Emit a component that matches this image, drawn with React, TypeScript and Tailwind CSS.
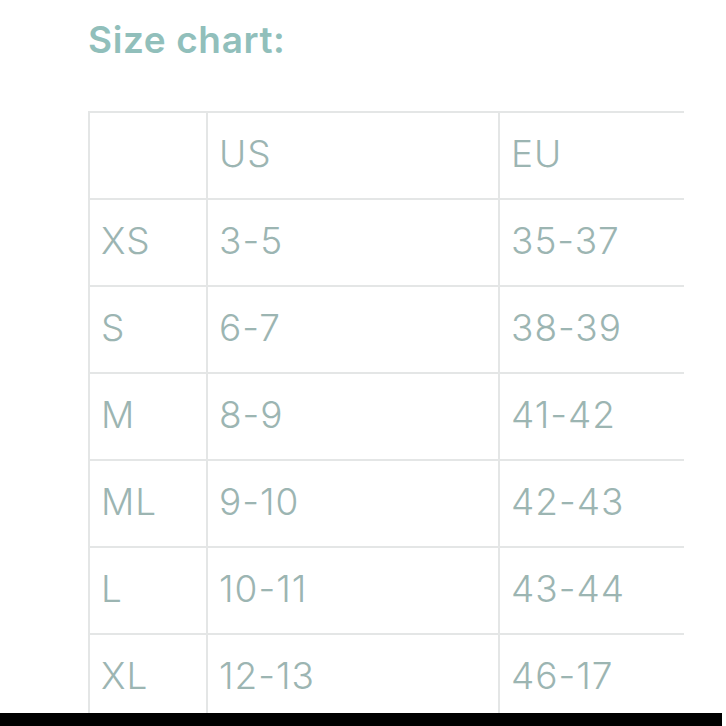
import React from "react";

const rows: [string, string, string][] = [
  ["", "US", "EU"],
  ["XS", "3-5", "35-37"],
  ["S", "6-7", "38-39"],
  ["M", "8-9", "41-42"],
  ["ML", "9-10", "42-43"],
  ["L", "10-11", "43-44"],
  ["XL", "12-13", "46-17"],
];

export default function App() {
  return (
    <div
      className="w-[726px] h-[726px] bg-white flex flex-col overflow-hidden"
      style={{ fontFamily: "Inter, 'Open Sans', sans-serif" }}
    >
      <div className="flex-1 overflow-hidden">
        <h1 className="pl-[88px] pt-[18px] text-[37px] leading-[44px] font-semibold tracking-[0.6px] text-[#91bfbb]">
          Size chart:
        </h1>
        <div className="ml-[88px] mt-[49px] w-[596px] grid grid-cols-[118px_292px_186px]">
          {rows.map((r, i) =>
            r.map((c, j) => (
              <div
                key={`${i}-${j}`}
                className="h-[87px] border-l-2 border-t-2 border-[#e4e6e6] flex items-center pl-[11px] pb-[4px] text-[37px] font-light tracking-[1px] text-[#9cb5b2]"
              >
                {c}
              </div>
            ))
          )}
        </div>
      </div>
      <div className="h-[13px] w-[722px] bg-black shrink-0" />
    </div>
  );
}
